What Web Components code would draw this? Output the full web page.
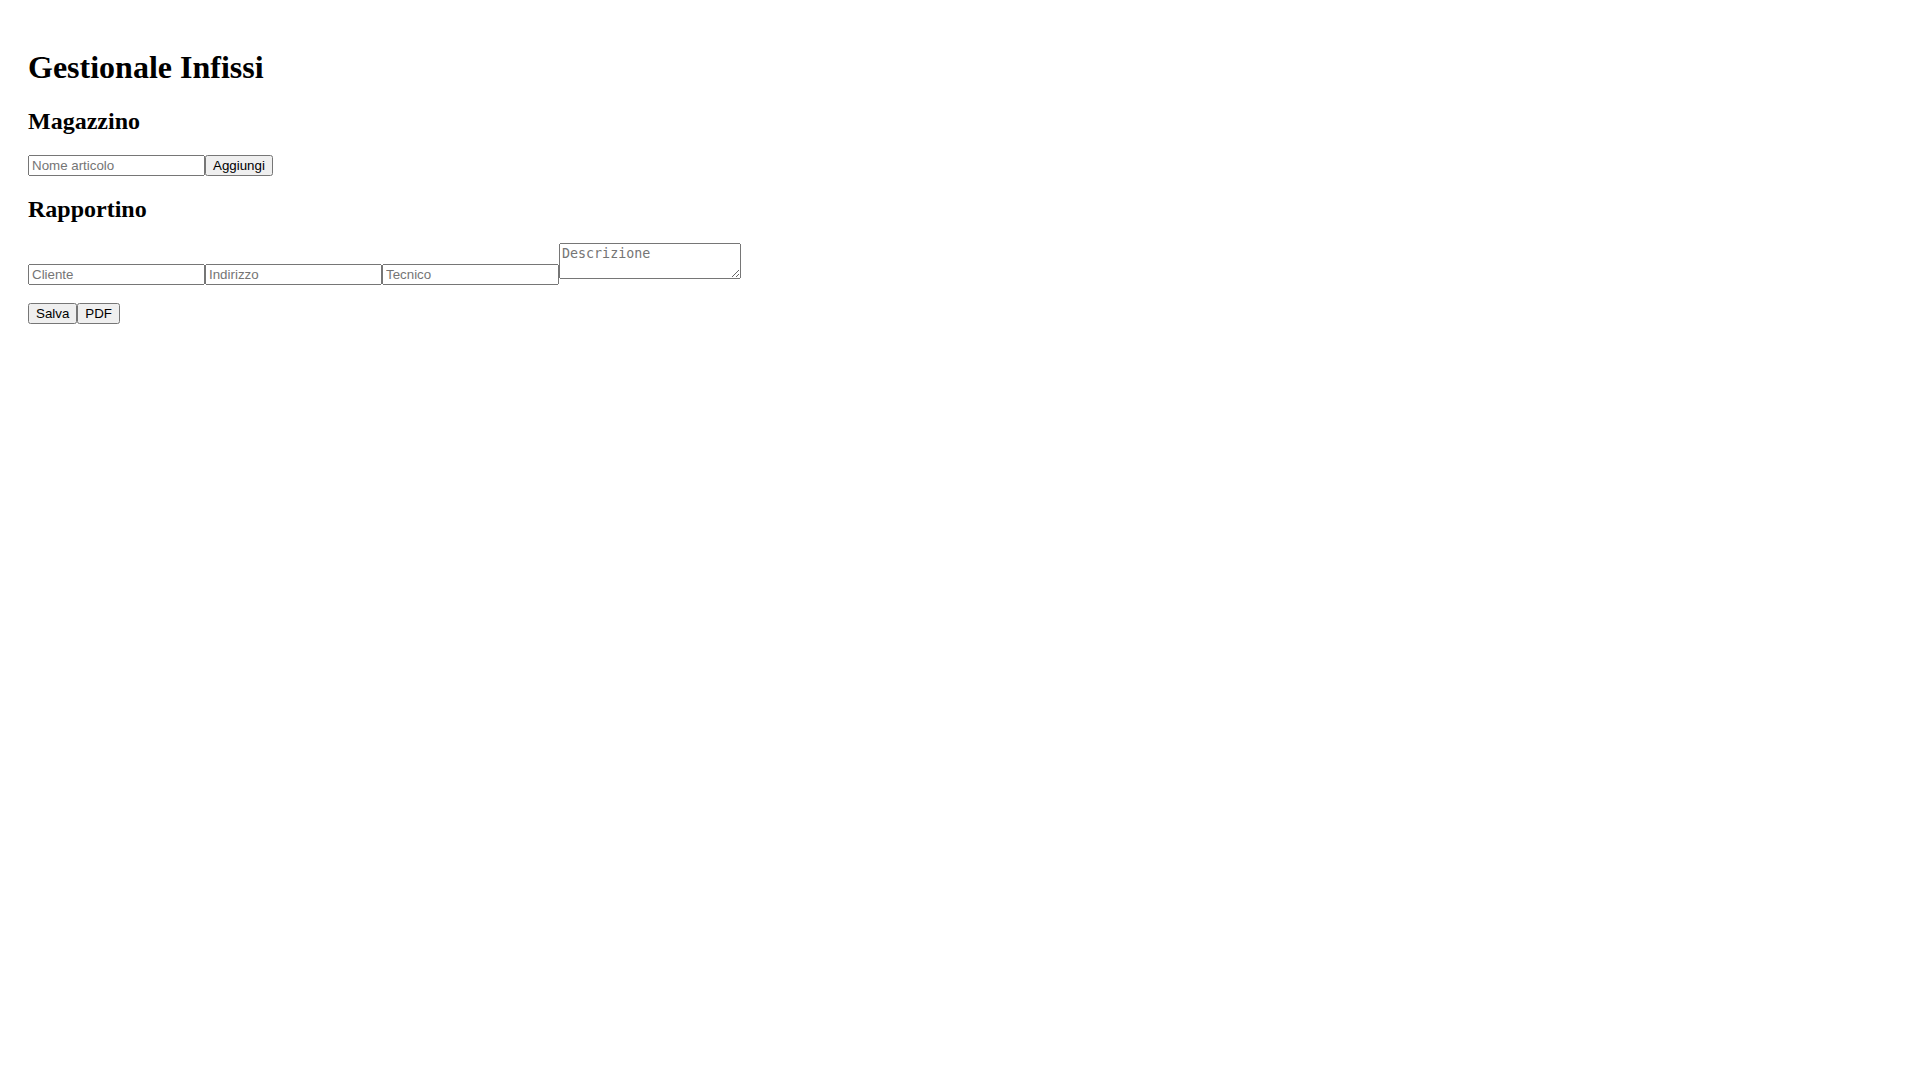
<!DOCTYPE html>
<html lang="it">
<head>
<meta charset="utf-8">
<title>Gestionale Infissi</title>
<style>
    body {
        font-family: 'Liberation Serif', serif;
    }
</style>
</head>
<body>

<gestionale-app>
    <gestionale-section heading="Magazzino">
        <magazzino-form></magazzino-form>
    </gestionale-section>
    <gestionale-section heading="Rapportino">
        <rapportino-form></rapportino-form>
    </gestionale-section>
</gestionale-app>

<script>
/**
 * small helper, every component clones its template
 * into a fresh open shadowroot
 */
function render(host, html) {
    const template = document.createElement('template')
    template.innerHTML = html
    host.attachShadow({ mode: 'open' })
    host.shadowRoot.appendChild(template.content.cloneNode(true))
}

/**
 * the fields and buttons look the same in all forms
 */
const controlStyles = `
    :host {
        display: block;
    }
    input, button {
        font-family: 'Liberation Sans', sans-serif;
    }
    input {
        box-sizing: border-box;
        width: 177px;
    }
    textarea {
        font-family: 'DejaVu Sans Mono', monospace;
    }
`

/**
 * page frame with the main title
 */
class GestionaleApp extends HTMLElement {
    constructor() {
        super()
        render(this, `
            <style>
                :host {
                    display: block;
                    padding: 20px;
                }
            </style>
            <h1>Gestionale Infissi</h1>
            <slot></slot>
        `)
    }
}

/**
 * a section with a heading, the form comes in via the slot
 */
class GestionaleSection extends HTMLElement {
    constructor() {
        super()
        render(this, `
            <style>
                :host {
                    display: block;
                }
            </style>
            <h2></h2>
            <slot></slot>
        `)
        this.shadowRoot.querySelector('h2').textContent = this.getAttribute('heading')
    }
}

class MagazzinoForm extends HTMLElement {
    constructor() {
        super()
        render(this, `
            <style>${controlStyles}</style>
            <input placeholder="Nome articolo" aria-label="Nome articolo"><button type="button">Aggiungi</button>
        `)
    }
}

class RapportinoForm extends HTMLElement {
    constructor() {
        super()
        render(this, `
            <style>${controlStyles}</style>
            <input placeholder="Cliente" aria-label="Cliente"><input placeholder="Indirizzo" aria-label="Indirizzo"><input placeholder="Tecnico" aria-label="Tecnico"><textarea placeholder="Descrizione" aria-label="Descrizione"></textarea>
            <br><br>
            <button type="button">Salva</button><button type="button">PDF</button>
        `)
    }
}

window.customElements.define('gestionale-app', GestionaleApp)
window.customElements.define('gestionale-section', GestionaleSection)
window.customElements.define('magazzino-form', MagazzinoForm)
window.customElements.define('rapportino-form', RapportinoForm)
</script>
</body>
</html>
